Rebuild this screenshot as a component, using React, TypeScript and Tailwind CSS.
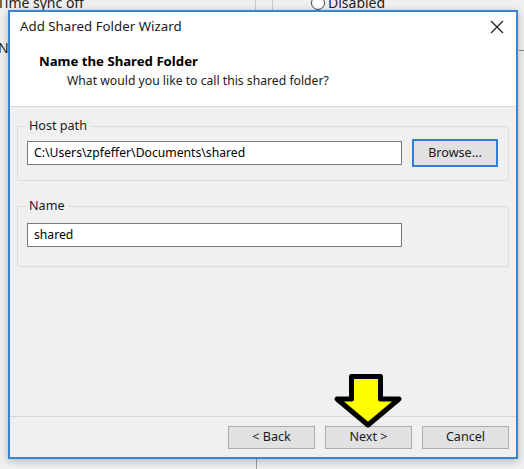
import React from "react";

const font = { fontFamily: '"Noto Sans", "Open Sans", sans-serif' };

function GroupBox({ label, children, pt }: { label: string; children: React.ReactNode; pt: string }) {
  return (
    <div className={"relative mx-[7px] border border-[#dcdcdc] rounded-[2px] px-[9px] pb-[13px] " + pt}>
      <span className="absolute left-[8px] top-[-10px] bg-[#f0f0f0] px-[3px] text-[12.6px] leading-[18px] text-[#1a1a1a]">
        {label}
      </span>
      {children}
    </div>
  );
}

function Btn({ children, focused }: { children: React.ReactNode; focused?: boolean }) {
  return (
    <div
      className={
        "flex-1 flex items-center justify-center text-[12.6px] text-[#1a1a1a] bg-[#e1e1e1] " +
        (focused ? "border-2 border-[#2f7fd6]" : "border border-[#adadad]")
      }
    >
      {children}
    </div>
  );
}

export default function App() {
  return (
    <div className="relative w-[524px] h-[469px] bg-[#f0f0f0] overflow-hidden" style={font}>
      {/* background window */}
      <div className="absolute left-[-3px] top-[-8px] text-[14px] text-[#222]">Time sync off</div>
      <div className="absolute left-[311px] top-[-8px] flex items-center gap-[3px] text-[14px] text-[#222]">
        <span className="w-[14px] h-[14px] rounded-full border border-[#444] bg-white" />
        <span>Disabled</span>
      </div>
      <div className="absolute left-[255px] top-0 w-px h-[12px] bg-[#c8c8c8]" />
      <div className="absolute left-[272px] top-0 w-px h-[12px] bg-[#c8c8c8]" />
      <div className="absolute left-[256px] top-[459px] w-px h-[12px] bg-[#a0a0a0]" />
      <div className="absolute left-[-2px] top-[37px] text-[14px] text-[#222]">N</div>
      <div className="absolute left-[519px] top-[50px] w-[5px] h-px bg-[#888]" />

      {/* dialog */}
      <div className="absolute left-[8px] top-[10px] w-[510px] h-[449px] border-2 border-[#3a84d0] shadow-[0_2px_8px_rgba(0,0,0,0.25)] flex flex-col bg-[#f0f0f0]">
        <div className="bg-white flex flex-col h-[95px] border-b border-[#d6d6d6]">
          <div className="h-[30px] flex items-center justify-between pl-[10px] pr-[12px]">
            <span className="text-[13.3px] text-[#1a1a1a]">Add Shared Folder Wizard</span>
            <svg width="14" height="14" viewBox="0 0 14 14">
              <path d="M1 1 L13 13 M13 1 L1 13" stroke="#222" strokeWidth="1.3" />
            </svg>
          </div>
          <div className="pl-[29px] pt-[10px]">
            <div className="text-[13.2px] font-bold text-black leading-[19px]">Name the Shared Folder</div>
            <div className="pl-[28px] text-[12.2px] text-[#1a1a1a] leading-[19px]">
              What would you like to call this shared folder?
            </div>
          </div>
        </div>

        <div className="flex-1 flex flex-col pt-[19px] gap-[25px]">
          <GroupBox label="Host path" pt="pt-[12px]">
            <div className="flex items-center gap-[10px]">
              <div className="w-[375px] h-[24px] bg-white border border-[#7a7a7a] flex items-center px-[6px] text-[12.2px] text-black">
                C:\Users\zpfeffer\Documents\shared
              </div>
              <div className="w-[86px] h-[28px] flex">
                <Btn focused>Browse...</Btn>
              </div>
            </div>
          </GroupBox>
          <GroupBox label="Name" pt="pt-[16px]">
            <div className="w-[375px] h-[24px] bg-white border border-[#7a7a7a] flex items-center px-[6px] text-[12.2px] text-black mb-[6px]">
              shared
            </div>
          </GroupBox>
        </div>

        <div className="border-t border-[#d6d6d6] h-[41px] flex items-start justify-end gap-[10px] pr-[7px] pt-[9px]">
          <div className="w-[87px] h-[23px] flex"><Btn>&lt; Back</Btn></div>
          <div className="w-[87px] h-[23px] flex"><Btn>Next &gt;</Btn></div>
          <div className="w-[87px] h-[23px] flex"><Btn>Cancel</Btn></div>
        </div>
      </div>

      {/* arrow annotation */}
      <svg className="absolute left-[330px] top-[370px]" width="76" height="62" viewBox="0 0 76 62">
        <polygon
          points="21.5,6.5 50.5,6.5 50.5,29 69,29 38,55 7,29 21.5,29"
          fill="#ffff00"
          stroke="#000"
          strokeWidth="5"
          strokeLinejoin="round"
        />
      </svg>
    </div>
  );
}
